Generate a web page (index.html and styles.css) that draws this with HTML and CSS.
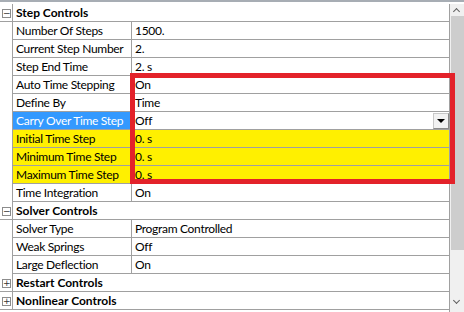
FILE: index.html
```html
<!DOCTYPE html>
<html lang="en">
<head>
  <meta charset="UTF-8" />
  <title>Details</title>
  <link rel="stylesheet" href="styles.css">
</head>
<body>
  <div class="panel">
    <div class="grid">
      <div class="row cat"><span class="gut"><i class="tog">&minus;</i></span><span class="name">Step Controls</span></div>
      <div class="row"><span class="gut"></span><span class="lbl">Number Of Steps</span><span class="val">1500.</span></div>
      <div class="row"><span class="gut"></span><span class="lbl">Current Step Number</span><span class="val">2.</span></div>
      <div class="row"><span class="gut"></span><span class="lbl">Step End Time</span><span class="val">2. s</span></div>
      <div class="row"><span class="gut"></span><span class="lbl">Auto Time Stepping</span><span class="val">On</span></div>
      <div class="row"><span class="gut"></span><span class="lbl">Define By</span><span class="val">Time</span></div>
      <div class="row"><span class="gut"></span><span class="lbl sel">Carry Over Time Step</span><span class="val combo">Off<b class="drop"></b></span></div>
      <div class="row hl"><span class="gut"></span><span class="lbl">Initial Time Step</span><span class="val">0. s</span></div>
      <div class="row hl"><span class="gut"></span><span class="lbl">Minimum Time Step</span><span class="val">0. s</span></div>
      <div class="row hl"><span class="gut"></span><span class="lbl">Maximum Time Step</span><span class="val">0. s</span></div>
      <div class="row"><span class="gut"></span><span class="lbl">Time Integration</span><span class="val">On</span></div>
      <div class="row cat"><span class="gut"><i class="tog">&minus;</i></span><span class="name">Solver Controls</span></div>
      <div class="row"><span class="gut"></span><span class="lbl">Solver Type</span><span class="val">Program Controlled</span></div>
      <div class="row"><span class="gut"></span><span class="lbl">Weak Springs</span><span class="val">Off</span></div>
      <div class="row"><span class="gut"></span><span class="lbl">Large Deflection</span><span class="val">On</span></div>
      <div class="row cat"><span class="gut"><i class="tog">+</i></span><span class="name">Restart Controls</span></div>
      <div class="row cat"><span class="gut"><i class="tog">+</i></span><span class="name">Nonlinear Controls</span></div>
    </div>
    <div class="scroll">
      <span class="arrow up"></span>
      <span class="thumb"></span>
      <span class="arrow down"></span>
    </div>
    <div class="mark"></div>
  </div>
</body>
</html>
```

FILE: styles.css
```css
body {
  margin: 0;
  font-family: Lato, "Open Sans", sans-serif;
  font-size: 12px;
  letter-spacing: -0.3px;
  color: #000;
  background: #fff;
}
.panel {
  position: relative;
  display: flex;
  height: 312px;
  border-top: 2px solid #a7adb4;
  padding-top: 2px;
  box-sizing: border-box;
  overflow: hidden;
}
.grid {
  flex: 1;
  border-right: 1px solid #a0a0a0;
}
.row {
  display: grid;
  grid-template-columns: 13px 119px 1fr;
  height: 18px;
  line-height: 17px;
}
.gut {
  border-right: 1px solid #a0a0a0;
  position: relative;
}
.lbl, .val, .name {
  border-bottom: 1px solid #a0a0a0;
  padding-left: 3px;
  white-space: nowrap;
  overflow: hidden;
}
.lbl {
  border-right: 1px solid #a0a0a0;
}
.name {
  grid-column: 2 / 4;
  font-weight: bold;
  letter-spacing: 0;
}
.cat .gut {
  border-bottom: 1px solid #a0a0a0;
}
.tog {
  position: absolute;
  left: 2px;
  top: 5px;
  width: 7px;
  height: 7px;
  border: 1px solid #8c8c8c;
  font-family: "DejaVu Sans", sans-serif;
  font-style: normal;
  font-size: 9px;
  line-height: 7px;
  letter-spacing: 0;
  text-align: center;
  color: #333;
  background: #fff;
}
.sel {
  background: #3399ff;
  color: #fff;
}
.hl .lbl, .hl .val {
  background: #fff000;
}
.combo {
  position: relative;
}
.drop {
  position: absolute;
  right: 0;
  top: 1px;
  width: 14px;
  height: 14px;
  background: #f2f2f2;
  border: 1px solid #c8c8c8;
  border-right-color: #8a8a8a;
  border-bottom-color: #8a8a8a;
}
.drop::after {
  content: "";
  position: absolute;
  left: 3px;
  top: 5px;
  border-left: 4px solid transparent;
  border-right: 4px solid transparent;
  border-top: 4px solid #000;
}
.scroll {
  width: 14px;
  display: flex;
  flex-direction: column;
  background: #f0f0f0;
}
.arrow {
  height: 12px;
  position: relative;
}
.arrow::after {
  content: "";
  position: absolute;
  left: 4px;
  width: 4px;
  height: 4px;
  border-left: 1px solid #606060;
  border-top: 1px solid #606060;
}
.up::after {
  top: 5px;
  transform: rotate(45deg);
}
.down {
  margin-top: auto;
  height: 16px;
}
.down::after {
  top: 2px;
  transform: rotate(225deg);
}
.thumb {
  height: 234px;
  margin: 0 0 0 1px;
  background: #cdcdcd;
}
.mark {
  position: absolute;
  left: 130px;
  top: 71px;
  width: 325px;
  height: 111px;
  border: 5px solid #e3222a;
  box-sizing: border-box;
}
```
